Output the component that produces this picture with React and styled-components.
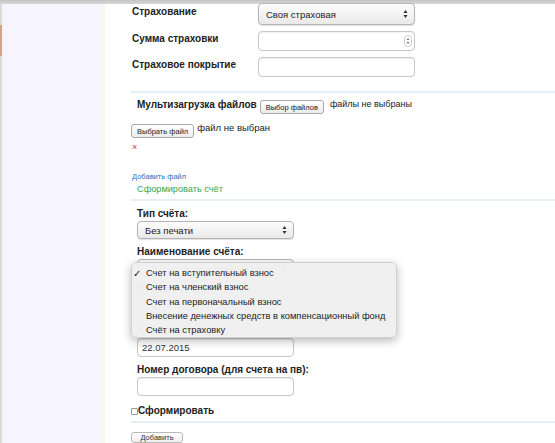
import React from "react";
import styled, { createGlobalStyle } from "styled-components";

const Global = createGlobalStyle`
  html, body { margin: 0; padding: 0; background: #fff; }
  body { font-family: "Liberation Sans", Arial, sans-serif; color: #222; overflow: hidden; }
  * { box-sizing: border-box; }
`;

const Page = styled.div`
  width: 555px;
  height: 443px;
  display: flex;
  flex-direction: column;
  overflow: hidden;
`;

const TopBar = styled.div`
  height: 4px;
  flex: none;
  background: linear-gradient(#c4c4c4, #d6d6d6);
`;

const Body = styled.div`
  flex: 1;
  display: flex;
  min-height: 0;
`;

const Sidebar = styled.div`
  position: relative;
  width: 105px;
  flex: none;
  background: #f5f4ff;
  border-left: 2px solid #dcdad6;
  border-right: 2px solid #f9f9e4;
`;

const SideMark = styled.div`
  position: absolute;
  left: -2px;
  top: 21px;
  width: 2px;
  height: 31px;
  background: #d9a27f;
`;

const Main = styled.div`
  position: relative;
  flex: 1;
  padding-left: 26px;
  display: flex;
  flex-direction: column;
`;

const Rows = styled.div`
  display: flex;
  flex-direction: column;
  gap: 6px;
  padding-bottom: 14px;
`;

const Row = styled.div`
  display: flex;
  align-items: flex-start;
  height: ${(p) => p.$h || 20}px;
`;

const RowLabel = styled.div`
  width: 127px;
  font-size: 10px;
  font-weight: bold;
  color: #222;
  padding-top: ${(p) => p.$pt || 2}px;
  padding-left: 1px;
`;

const Select = styled.div`
  position: relative;
  width: ${(p) => p.$w}px;
  height: ${(p) => p.$h || 20}px;
  border: 1px solid #b4b4b4;
  border-radius: 4px;
  background: linear-gradient(#fdfdfd, #e9e9e9);
  box-shadow: 0 1px 1px rgba(0,0,0,0.12);
  font-size: 9.5px;
  color: #222;
  display: flex;
  align-items: center;
  padding-left: 7px;
`;

const Arrows = styled.svg`
  position: absolute;
  right: 6px;
  top: 50%;
  transform: translateY(-50%);
`;

const Input = styled.div`
  position: relative;
  width: ${(p) => p.$w}px;
  height: ${(p) => p.$h || 20}px;
  border: 1px solid #c6c6c6;
  border-radius: 4px;
  background: #fff;
  box-shadow: inset 0 1px 1px rgba(0,0,0,0.06);
  font-size: 9.5px;
  color: #333;
  display: flex;
  align-items: center;
  padding-left: 4px;
`;

const Spinner = styled.div`
  position: absolute;
  right: 2px;
  top: 3px;
  width: 8px;
  height: 12px;
  border: 1px solid #cfcfcf;
  border-radius: 4px;
  display: flex;
  align-items: center;
  justify-content: center;
`;

const Rule = styled.div`
  height: 2px;
  background: #e6eef8;
  flex: none;
`;

const UploadBlock = styled.div`
  display: flex;
  flex-direction: column;
  padding: 6px 0 0 0;
`;

const Line = styled.div`
  display: flex;
  align-items: flex-start;
  gap: 3px;
  height: ${(p) => p.$h}px;
  padding-left: ${(p) => p.$pl || 0}px;
`;

const BoldText = styled.span`
  font-size: 10px;
  font-weight: bold;
  color: #222;
  padding-top: ${(p) => p.$pt || 0}px;
`;

const Plain = styled.span`
  font-size: ${(p) => p.$fs || 9.5}px;
  color: #222;
  margin-top: ${(p) => p.$mt || 0}px;
  margin-left: ${(p) => p.$ml || 0}px;
`;

const FileButton = styled.div`
  height: 14px;
  padding: 0 5px;
  border: 1px solid #a9a9a9;
  border-radius: 3px;
  background: linear-gradient(#ffffff, #ececec);
  font-size: 7.5px;
  color: #222;
  display: flex;
  align-items: center;
  margin-top: ${(p) => p.$mt || 0}px;
  margin-left: ${(p) => p.$ml || 0}px;
`;

const RemoveX = styled.div`
  font-size: 9px;
  color: #d03030;
  line-height: 1;
  height: 29px;
  padding-left: 1px;
`;

const LinkSmall = styled.div`
  font-size: 7.5px;
  color: #2a6fc0;
  height: 12px;
  padding-left: 1px;
`;

const GreenLink = styled.div`
  font-size: 9.2px;
  color: #3aa64c;
  padding-left: 6px;
  height: 15px;
`;

const Form = styled.div`
  display: flex;
  flex-direction: column;
  padding-left: 6px;
  padding-top: 7px;
`;

const FieldLabel = styled.div`
  font-size: 10px;
  font-weight: bold;
  color: #222;
  height: 12px;
  margin-bottom: 1px;
`;

const Field = styled.div`
  display: flex;
  flex-direction: column;
  margin-bottom: ${(p) => p.$mb || 0}px;
`;

const CheckRow = styled.label`
  display: flex;
  align-items: center;
  height: 14px;
  margin-top: 9px;
  margin-bottom: 5px;
`;

const Box = styled.span`
  width: 7px;
  height: 7px;
  border: 1px solid #999;
  border-radius: 1px;
  background: #fff;
  margin-top: 1px;
`;

const Submit = styled.div`
  margin-top: 9px;
  width: 52px;
  height: 18px;
  border: 1px solid #b8b8b8;
  border-radius: 3px;
  background: linear-gradient(#ffffff, #eeeeee);
  font-size: 7.5px;
  color: #333;
  display: flex;
  align-items: center;
  justify-content: center;
`;

const Menu = styled.div`
  position: absolute;
  left: 26px;
  top: 258px;
  width: 266px;
  height: 76px;
  background: rgba(240, 240, 240, 0.98);
  border: 1px solid #d0d0d0;
  border-radius: 5px;
  box-shadow: 0 3px 10px rgba(0,0,0,0.28);
  padding-top: 3px;
  display: flex;
  flex-direction: column;
`;

const MenuItem = styled.div`
  position: relative;
  height: 14.6px;
  font-size: 9.3px;
  color: #222;
  padding-left: 14px;
  display: flex;
  align-items: center;
`;

const Check = styled.span`
  position: absolute;
  left: 1px;
  font-size: 10px;
  font-family: "DejaVu Sans", sans-serif;
`;

const SelectArrows = () => (
  <Arrows width="5" height="9" viewBox="0 0 5 9">
    <path d="M2.5 0.5 L4.5 3.5 L0.5 3.5 Z" fill="#333" />
    <path d="M2.5 8.5 L4.5 5.5 L0.5 5.5 Z" fill="#333" />
  </Arrows>
);

export default function App() {
  return (
    <Page>
      <Global />
      <TopBar />
      <Body>
        <Sidebar>
          <SideMark />
        </Sidebar>
        <Main>
          <Rows>
            <Row $h={21}>
              <RowLabel $pt={2}>Страхование</RowLabel>
              <Select $w={157} $h={22} style={{ marginTop: -1 }}>
                Своя страховая
                <SelectArrows />
              </Select>
            </Row>
            <Row>
              <RowLabel $pt={0}>Сумма страховки</RowLabel>
              <Input $w={157}>
                <Spinner>
                  <svg width="4" height="8" viewBox="0 0 4 8">
                    <path d="M2 1 L3.5 3 L0.5 3 Z" fill="#777" />
                    <path d="M2 7 L3.5 5 L0.5 5 Z" fill="#777" />
                  </svg>
                </Spinner>
              </Input>
            </Row>
            <Row>
              <RowLabel $pt={0}>Страховое покрытие</RowLabel>
              <Input $w={157} />
            </Row>
          </Rows>
          <Rule />
          <UploadBlock>
            <Line $h={25} $pl={6}>
              <BoldText $pt={0}>Мультизагрузка файлов</BoldText>
              <FileButton $mt={1} $ml={0}>Выбор файлов</FileButton>
              <Plain $fs={9} $ml={3}>файлы не выбраны</Plain>
            </Line>
            <Line $h={19}>
              <FileButton $mt={0}>Выбрать файл</FileButton>
              <Plain $mt={-2}>файл не выбран</Plain>
            </Line>
            <RemoveX>×</RemoveX>
            <LinkSmall>Добавить файл</LinkSmall>
            <GreenLink>Сформировать счёт</GreenLink>
          </UploadBlock>
          <Rule />
          <Form>
            <Field $mb={7}>
              <FieldLabel>Тип счёта:</FieldLabel>
              <Select $w={157} $h={18}>
                Без печати
                <SelectArrows />
              </Select>
            </Field>
            <Field $mb={7}>
              <FieldLabel>Наименование счёта:</FieldLabel>
              <Select $w={157} $h={18}>
                Счет на вступительный взнос
                <SelectArrows />
              </Select>
            </Field>
            <Field $mb={9}>
              <FieldLabel>Сумма счёта:</FieldLabel>
              <Input $w={157} $h={19} />
            </Field>
            <Field $mb={7}>
              <FieldLabel>Дата счёта:</FieldLabel>
              <Input $w={157} $h={19}>22.07.2015</Input>
            </Field>
            <Field>
              <FieldLabel>Номер договора (для счета на пв):</FieldLabel>
              <Input $w={157} $h={19} />
            </Field>
          </Form>
          <CheckRow>
            <Box />
            <BoldText>Сформировать</BoldText>
          </CheckRow>
          <Rule />
          <Submit>Добавить</Submit>
          <Menu>
            <MenuItem><Check>✓</Check>Счет на вступительный взнос</MenuItem>
            <MenuItem>Счет на членский взнос</MenuItem>
            <MenuItem>Счет на первоначальный взнос</MenuItem>
            <MenuItem>Внесение денежных средств в компенсационный фонд</MenuItem>
            <MenuItem>Счёт на страховку</MenuItem>
          </Menu>
        </Main>
      </Body>
    </Page>
  );
}
